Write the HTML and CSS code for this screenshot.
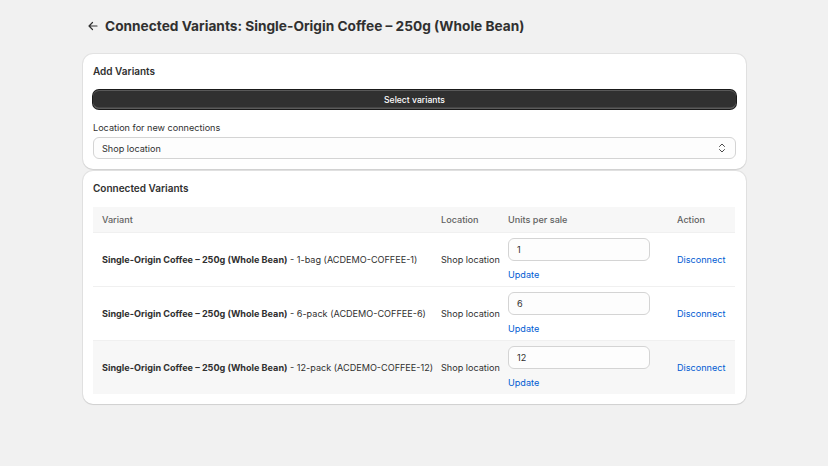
FILE: index.html
```html
<!DOCTYPE html>
<html lang="en">
<head>
  <meta charset="UTF-8">
  <meta name="viewport" content="width=device-width, initial-scale=1.0">
  <title>Connected Variants</title>
  <link rel="stylesheet" href="styles.css">
</head>
<body>
  <div class="page">
    <div class="page-header">
      <button class="back" type="button" aria-label="Back">
        <svg width="12" height="12" viewBox="0 0 12 12" fill="none" stroke="#303030" stroke-width="1.2" stroke-linecap="round" stroke-linejoin="round">
          <path d="M10 6H2M5.5 2.5L2 6l3.5 3.5"/>
        </svg>
      </button>
      <h1>Connected Variants: Single-Origin Coffee – 250g (Whole Bean)</h1>
    </div>

    <div class="card">
      <h2>Add Variants</h2>
      <button class="primary" type="button">Select variants</button>
      <label class="field-label" for="location">Location for new connections</label>
      <div class="select" id="location">
        <span>Shop location</span>
        <svg width="8" height="10" viewBox="0 0 8 10" fill="none" stroke="#4a4a4a" stroke-width="1" stroke-linecap="round" stroke-linejoin="round">
          <path d="M1.5 3.5L4 1l2.5 2.5M1.5 6.5L4 9l2.5-2.5"/>
        </svg>
      </div>
    </div>

    <div class="card">
      <h2>Connected Variants</h2>
      <table>
        <colgroup>
          <col class="col-variant">
          <col class="col-location">
          <col class="col-units">
          <col class="col-action">
        </colgroup>
        <thead>
          <tr>
            <th>Variant</th>
            <th>Location</th>
            <th>Units per sale</th>
            <th>Action</th>
          </tr>
        </thead>
        <tbody>
          <tr>
            <td><strong>Single-Origin Coffee – 250g (Whole Bean)</strong> - 1-bag (ACDEMO-COFFEE-1)</td>
            <td>Shop location</td>
            <td>
              <div class="units-input">1</div>
              <a class="link" href="#">Update</a>
            </td>
            <td><a class="link" href="#">Disconnect</a></td>
          </tr>
          <tr>
            <td><strong>Single-Origin Coffee – 250g (Whole Bean)</strong> - 6-pack (ACDEMO-COFFEE-6)</td>
            <td>Shop location</td>
            <td>
              <div class="units-input">6</div>
              <a class="link" href="#">Update</a>
            </td>
            <td><a class="link" href="#">Disconnect</a></td>
          </tr>
          <tr class="shaded">
            <td><strong>Single-Origin Coffee – 250g (Whole Bean)</strong> - 12-pack (ACDEMO-COFFEE-12)</td>
            <td>Shop location</td>
            <td>
              <div class="units-input">12</div>
              <a class="link" href="#">Update</a>
            </td>
            <td><a class="link" href="#">Disconnect</a></td>
          </tr>
        </tbody>
      </table>
    </div>
  </div>
</body>
</html>
```

FILE: styles.css
```css
body {
  font-family: Inter, "Noto Sans", sans-serif;
  background-color: #f1f1f1;
  color: #303030;
  margin: 0;
  font-size: 9.1px;
}

.page {
  width: 663px;
  margin: 0 auto;
  padding-top: 16px;
  padding-left: 1px;
}

.page-header {
  display: flex;
  align-items: center;
  gap: 5px;
  height: 20px;
  padding-left: 3px;
  margin-bottom: 18px;
}

.back {
  border: none;
  background: none;
  padding: 0;
  width: 14px;
  height: 14px;
  display: flex;
  align-items: center;
  justify-content: center;
  cursor: pointer;
}

h1 {
  font-size: 13.7px;
  font-weight: 700;
  margin: 0;
  color: #303030;
}

.card {
  background: #fff;
  border-radius: 10px;
  box-shadow: 0 0 0 1px rgba(0, 0, 0, 0.06), 0 1px 1px rgba(0, 0, 0, 0.08);
  padding: 11px 10px 10px;
  margin-bottom: 2px;
}

h2 {
  font-size: 10px;
  font-weight: 600;
  margin: 0 0 12px;
  line-height: 13px;
}

.primary {
  display: block;
  width: 100%;
  height: 19px;
  border: none;
  border-radius: 6px;
  background: #303030;
  color: #fff;
  font-family: inherit;
  font-size: 8.6px;
  font-weight: 450;
  box-shadow: inset 0 1px 0 rgba(255, 255, 255, 0.2), inset 0 -1.5px 0 #5a5a5a, 0 0 0 1px #1a1a1a;
  cursor: pointer;
}

.field-label {
  display: block;
  margin-top: 13px;
  margin-bottom: 3px;
  line-height: 12px;
}

.select {
  height: 20px;
  border: 1px solid #d4d4d4;
  border-radius: 6px;
  background: #fdfdfd;
  display: flex;
  align-items: center;
  justify-content: space-between;
  padding: 0 9px 0 8px;
}

table {
  width: 642px;
  table-layout: fixed;
  border-collapse: collapse;
  margin-top: 7px;
}

.col-variant { width: 339px; }
.col-location { width: 67px; }
.col-units { width: 169px; }
.col-action { width: 67px; }

th {
  background: #f7f7f7;
  color: #616161;
  font-weight: 450;
  text-align: left;
  height: 25px;
  padding: 0 9px;
  white-space: nowrap;
}

td {
  height: 53px;
  padding: 0 9px;
  border-top: 1px solid #f0f0f0;
  vertical-align: middle;
  white-space: nowrap;
}

td strong {
  font-weight: 650;
}

.shaded td {
  background: #f7f7f7;
}

.units-input {
  width: 142px;
  height: 23px;
  box-sizing: border-box;
  border: 1px solid #d4d4d4;
  border-radius: 6px;
  background: #fdfdfd;
  padding: 0 8px;
  display: flex;
  align-items: center;
  margin-bottom: 8px;
}

.link {
  color: #005bd3;
  text-decoration: none;
  line-height: 12px;
}
```
